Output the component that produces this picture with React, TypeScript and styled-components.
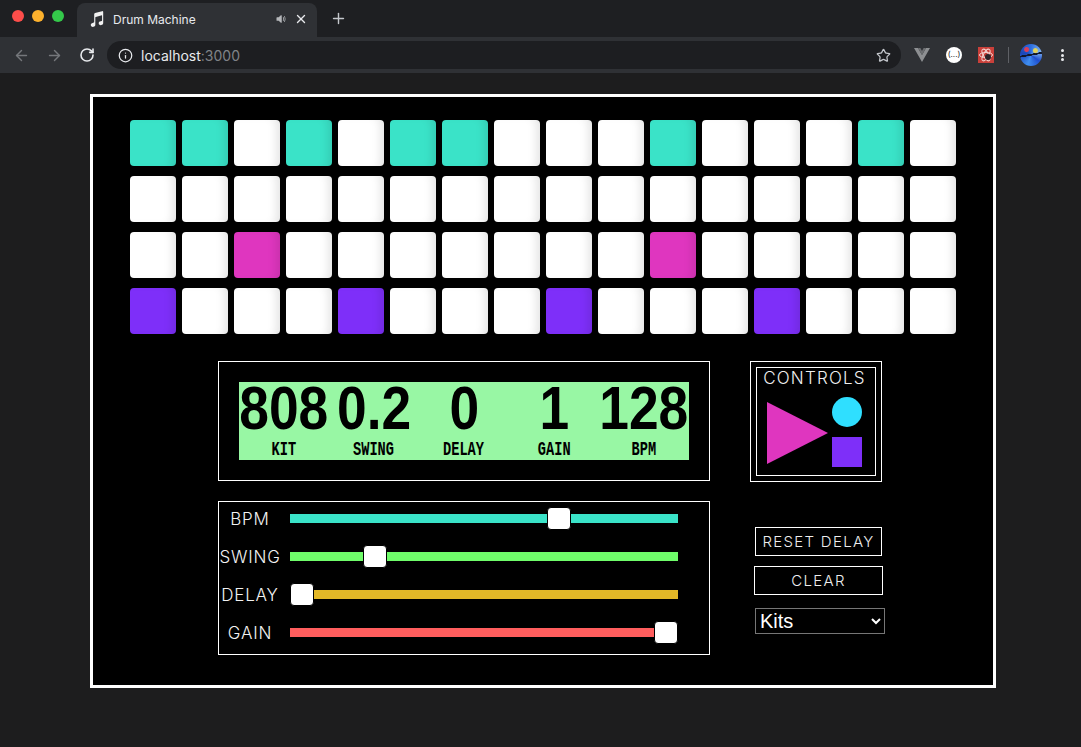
import { useState } from 'react'
import styled, { createGlobalStyle } from 'styled-components'
import { ArrowLeft, ArrowRight, Info, Plus, RotateCw, Star, X } from 'lucide-react'
import { IoMusicalNotes, IoVolumeMedium } from 'react-icons/io5'

const GlobalStyle = createGlobalStyle`
  html, body {
    margin: 0;
    padding: 0;
    background: #1d1d1e;
  }
  * {
    box-sizing: border-box;
  }
`

const Page = styled.div`
  width: 1081px;
  height: 747px;
  overflow: hidden;
  font-family: 'Inter', 'Liberation Sans', sans-serif;
`

/* browser chrome */
const TabStrip = styled.div`
  height: 37px;
  background: #1e1f22;
  display: flex;
  align-items: flex-end;
  padding-left: 12px;
`
const Lights = styled.div`
  display: flex;
  gap: 8px;
  align-self: flex-start;
  margin-top: 10px;
  width: 65px;
`
const Light = styled.span<{ $color: string }>`
  width: 12px;
  height: 12px;
  border-radius: 50%;
  background: ${(p) => p.$color};
`
const Tab = styled.div`
  width: 240px;
  height: 34px;
  background: #2f3135;
  border-radius: 8px 8px 0 0;
  display: flex;
  align-items: center;
  padding: 0 9px 2px 11px;
  color: #e8eaed;
  font-size: 12px;
`
const TabTitle = styled.span`
  margin-left: 7px;
  flex: 1;
`
const NewTab = styled.div`
  margin: 0 0 7px 13px;
  height: 24px;
  display: flex;
  align-items: center;
  color: #c4c7cc;
`
const Toolbar = styled.div`
  height: 36px;
  background: #2f3135;
  display: flex;
  align-items: center;
  padding-left: 13px;
  color: #e8eaed;
`
const NavIcons = styled.div`
  display: flex;
  gap: 16px;
  width: 94px;
  align-items: center;
`
const Omnibox = styled.div`
  width: 794px;
  height: 28px;
  border-radius: 14px;
  background: #1d1e21;
  display: flex;
  align-items: center;
  padding: 0 10px 0 11px;
  font-size: 14px;
`
const Host = styled.span`
  margin-left: 8px;
  flex: 1;
  span {
    color: #808387;
  }
`
const Extensions = styled.div`
  display: flex;
  align-items: center;
  margin-left: 13px;
`
const RoundBadge = styled.div`
  width: 16px;
  height: 16px;
  border-radius: 50%;
  background: #fff;
  color: #222;
  font-size: 8px;
  line-height: 15px;
  text-align: center;
  margin-left: 16px;
`
const Divider = styled.div`
  width: 1px;
  height: 16px;
  background: #5f6166;
  margin: 0 11px 0 14px;
`
const Avatar = styled.div`
  width: 22px;
  height: 22px;
  border-radius: 50%;
  background:
    radial-gradient(circle at 30% 25%, #d8405a 0 2px, transparent 3px),
    radial-gradient(circle at 70% 30%, #e0d25a 0 2px, transparent 3px),
    linear-gradient(170deg, transparent 45%, #10182e 46% 52%, transparent 53%),
    conic-gradient(#2d6fe0, #7fb2ee 20%, #1e4fd0 35%, #3f8ef0 55%, #1b46b8 78%, #2d6fe0);
`
const Dots = styled.div`
  display: flex;
  flex-direction: column;
  gap: 1.5px;
  margin-left: 19px;
  span {
    width: 3px;
    height: 3px;
    border-radius: 50%;
    background: #e8eaed;
  }
`

/* drum machine */
const Stage = styled.div`
  padding: 21px 0 0 90px;
`
const Frame = styled.main`
  width: 906px;
  height: 594px;
  background: #000;
  border: 3px solid #fff;
  padding: 23px 37px 0;
`
const Grid = styled.div`
  display: grid;
  grid-template-columns: repeat(16, 46px);
  grid-auto-rows: 46px;
  column-gap: 6px;
  row-gap: 10px;
`
const Pad = styled.button<{ $on?: string }>`
  border: 0;
  padding: 0;
  border-radius: 4px;
  background: ${(p) => p.$on || '#fff'};
  box-shadow: inset -9px 0 9px -5px rgba(0, 0, 0, 0.1);
`
const Lower = styled.div`
  display: grid;
  grid-template-columns: 492px 136px;
  column-gap: 40px;
  row-gap: 19px;
  margin: 27px 0 0 88px;
`
const DisplayBox = styled.section`
  height: 120px;
  border: 1px solid #fff;
  padding: 20px;
`
const Lcd = styled.div`
  width: 450px;
  height: 78px;
  background: #98f7a4;
  display: grid;
  grid-template-columns: repeat(5, 90px);
  color: #000;
`
const LcdCell = styled.div`
  display: flex;
  flex-direction: column;
  align-items: center;
  white-space: nowrap;
`
const LcdValue = styled.div`
  font-family: 'Liberation Sans', sans-serif;
  font-weight: 700;
  font-size: 62px;
  line-height: 50px;
  height: 59px;
  padding-top: 1px;
  transform: scaleX(0.86);
`
const LcdLabel = styled.div`
  font-family: 'Liberation Mono', monospace;
  font-weight: 700;
  font-size: 21px;
  line-height: 18px;
  transform: scaleX(0.65);
`
const ControlsOuter = styled.section`
  width: 132px;
  height: 121px;
  border: 1px solid #fff;
  padding: 5px;
`
const ControlsInner = styled.div`
  height: 109px;
  border: 1px solid #fff;
  padding: 0 13px 0 10px;
`
const ControlsTitle = styled.div`
  color: #eee;
  font-weight: 300;
  font-size: 17px;
  line-height: 20px;
  letter-spacing: 1.2px;
  white-space: nowrap;
  margin: 0 -8px 0 -8px;
  text-align: center;
`
const ControlsRow = styled.div`
  display: flex;
  justify-content: space-between;
  margin-top: 9px;
`
const Play = styled.div`
  width: 0;
  height: 0;
  margin-top: 5px;
  border-left: 61px solid #df36bf;
  border-top: 31px solid transparent;
  border-bottom: 31px solid transparent;
`
const Shapes = styled.div`
  display: flex;
  flex-direction: column;
  gap: 10px;
`
const Stop = styled.div`
  width: 30px;
  height: 30px;
  background: #7e2ff9;
`
const Record = styled(Stop)`
  background: #2fdfff;
  border-radius: 50%;
`
const SliderBox = styled.section`
  height: 154px;
  border: 1px solid #fff;
  padding: 5px 30px 0 0;
  display: flex;
  flex-direction: column;
  gap: 15px;
`
const SliderRow = styled.label`
  height: 23px;
  display: flex;
  align-items: center;
`
const SliderName = styled.span`
  width: 62px;
  margin-right: 9px;
  text-align: center;
  color: #f2f2f2;
  font-weight: 300;
  font-size: 17px;
  letter-spacing: 0.8px;
  white-space: nowrap;
`
const Range = styled.input<{ $color: string }>`
  appearance: none;
  -webkit-appearance: none;
  width: 388px;
  height: 9px;
  margin: 0;
  background: ${(p) => p.$color};
  outline: none;
  &::-webkit-slider-thumb {
    -webkit-appearance: none;
    width: 24px;
    height: 23px;
    background: #fff;
    border: 1px solid #000;
    border-radius: 4px;
  }
`
const Side = styled.div`
  display: flex;
  flex-direction: column;
  align-items: flex-start;
  padding: 26px 0 0 4px;
`
const TextButton = styled.button<{ $wide?: boolean }>`
  width: ${(p) => (p.$wide ? '129px' : '127px')};
  height: 29px;
  margin: 0 0 10px ${(p) => (p.$wide ? '0' : '1px')};
  padding: 0;
  background: #000;
  border: 1px solid #fff;
  color: #eee;
  font-family: 'Inter', sans-serif;
  font-weight: 300;
  font-size: 15px;
  letter-spacing: 1.3px;
  white-space: nowrap;
`
const KitSelect = styled.select`
  width: 130px;
  height: 26px;
  margin: 3px 0 0 1px;
  padding: 0;
  color-scheme: dark;
  background: #000;
  color: #fff;
  border: 1px solid #767676;
  border-radius: 0;
  font-family: 'Liberation Sans', sans-serif;
  font-size: 20px;
`

const teal = '#3ae3c8'
const magenta = '#df36bf'
const purple = '#7e2ff9'

const rows: [string, number[]][] = [
  [teal, [0, 1, 3, 5, 6, 10, 14]],
  [teal, []],
  [magenta, [2, 10]],
  [purple, [0, 4, 8, 12]],
]

export default function App() {
  const [bpm, setBpm] = useState(128)
  const [swing, setSwing] = useState(0.2)
  const [delay, setDelay] = useState(0)
  const [gain, setGain] = useState(1)

  const readout = [
    ['808', 'KIT'],
    [String(swing), 'SWING'],
    [String(delay), 'DELAY'],
    [String(gain), 'GAIN'],
    [String(bpm), 'BPM'],
  ]

  return (
    <Page>
      <GlobalStyle />
      <TabStrip>
        <Lights>
          <Light $color="#fc4d4a" />
          <Light $color="#fdb12d" />
          <Light $color="#34c84a" />
        </Lights>
        <Tab>
          <IoMusicalNotes size={18} color="#f1f1f1" />
          <TabTitle>Drum Machine</TabTitle>
          <IoVolumeMedium size={12} color="#b5b7ba" style={{ marginRight: 7 }} />
          <X size={14} strokeWidth={2.4} />
        </Tab>
        <NewTab>
          <Plus size={17} strokeWidth={2} />
        </NewTab>
      </TabStrip>
      <Toolbar>
        <NavIcons>
          <ArrowLeft size={17} color="#75777b" strokeWidth={2} />
          <ArrowRight size={17} color="#75777b" strokeWidth={2} />
          <RotateCw size={16} strokeWidth={2.4} />
        </NavIcons>
        <Omnibox>
          <Info size={15} />
          <Host>
            localhost<span>:3000</span>
          </Host>
          <Star size={15} color="#c4c7cc" />
        </Omnibox>
        <Extensions>
          <svg width="16" height="14" viewBox="0 0 16 14">
            <path d="M0 0h4l4 7 4-7h4L8 14z" fill="#8d8f92" />
            <path d="M4 0h2.4L8 3l1.6-3H12L8 7z" fill="#6d6f72" />
          </svg>
          <RoundBadge>(...)</RoundBadge>
          <svg width="16" height="16" viewBox="0 0 16 16" style={{ marginLeft: 16 }}>
            <rect width="16" height="16" fill="#c9403a" />
            <g fill="none" stroke="#f3d4d0" strokeWidth="1">
              <ellipse cx="8" cy="8" rx="6.5" ry="2.6" />
              <ellipse cx="8" cy="8" rx="6.5" ry="2.6" transform="rotate(60 8 8)" />
              <ellipse cx="8" cy="8" rx="6.5" ry="2.6" transform="rotate(120 8 8)" />
            </g>
            <circle cx="10" cy="10" r="3" fill="#2b2326" />
          </svg>
          <Divider />
          <Avatar />
          <Dots>
            <span />
            <span />
            <span />
          </Dots>
        </Extensions>
      </Toolbar>

      <Stage>
        <Frame>
          <Grid>
            {rows.map(([color, active], r) =>
              Array.from({ length: 16 }, (_, i) => (
                <Pad key={`${r}-${i}`} $on={active.includes(i) ? color : undefined} />
              )),
            )}
          </Grid>
          <Lower>
            <DisplayBox>
              <Lcd>
                {readout.map(([value, label]) => (
                  <LcdCell key={label}>
                    <LcdValue>{value}</LcdValue>
                    <LcdLabel>{label}</LcdLabel>
                  </LcdCell>
                ))}
              </Lcd>
            </DisplayBox>
            <ControlsOuter>
              <ControlsInner>
                <ControlsTitle>CONTROLS</ControlsTitle>
                <ControlsRow>
                  <Play />
                  <Shapes>
                    <Record />
                    <Stop />
                  </Shapes>
                </ControlsRow>
              </ControlsInner>
            </ControlsOuter>
            <SliderBox>
              <SliderRow>
                <SliderName>BPM</SliderName>
                <Range $color="#3ae3c8" type="range" min={0} max={181} value={bpm} onChange={(e) => setBpm(+e.target.value)} />
              </SliderRow>
              <SliderRow>
                <SliderName>SWING</SliderName>
                <Range $color="#6ffc6a" type="range" min={0} max={1} step={0.01} value={swing} onChange={(e) => setSwing(+e.target.value)} />
              </SliderRow>
              <SliderRow>
                <SliderName>DELAY</SliderName>
                <Range $color="#e3b827" type="range" min={0} max={1} step={0.01} value={delay} onChange={(e) => setDelay(+e.target.value)} />
              </SliderRow>
              <SliderRow>
                <SliderName>GAIN</SliderName>
                <Range $color="#ff5e5e" type="range" min={0} max={1} step={0.01} value={gain} onChange={(e) => setGain(+e.target.value)} />
              </SliderRow>
            </SliderBox>
            <Side>
              <TextButton>RESET DELAY</TextButton>
              <TextButton $wide>CLEAR</TextButton>
              <KitSelect defaultValue="kits">
                <option value="kits">Kits</option>
                <option value="808">808</option>
              </KitSelect>
            </Side>
          </Lower>
        </Frame>
      </Stage>
    </Page>
  )
}
